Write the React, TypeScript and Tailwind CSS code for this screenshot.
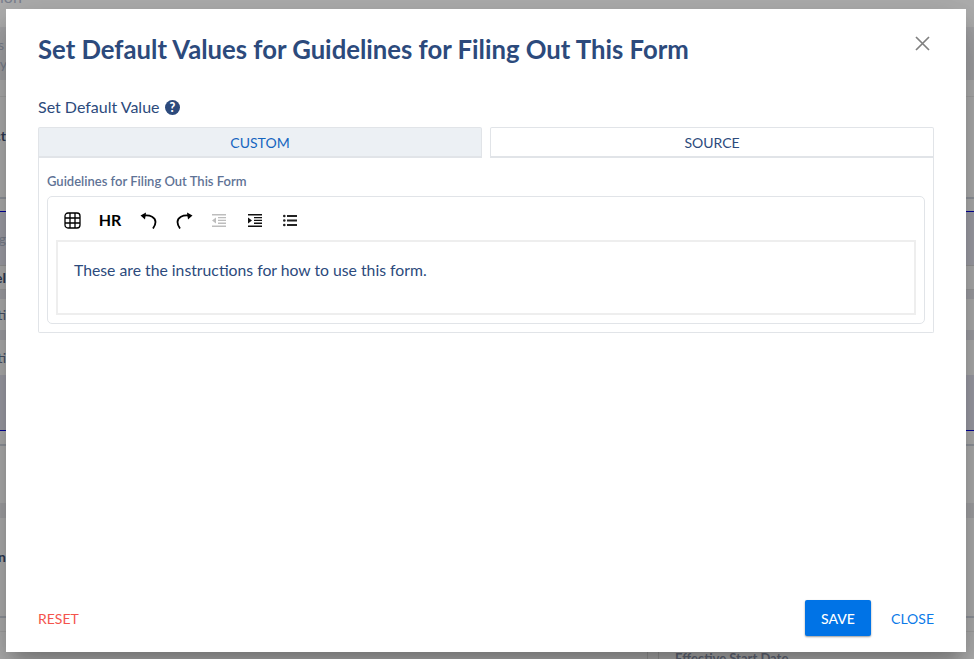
import React from "react";

const navy = "#2c4a7c";

function Tool({ className, children }: { className: string; children: React.ReactNode }) {
  return <span className={"flex h-6 items-center justify-center text-black " + className}>{children}</span>;
}

const TableIcon = () => (
  <svg width="17" height="17" viewBox="0 0 17 17" fill="none" stroke="#000" strokeWidth="1.3">
    <rect x="1" y="1" width="15" height="15" rx="3" />
    <path d="M6 1v15M11 1v15M1 6h15M1 11h15" />
  </svg>
);
const Undo = () => (
  <svg width="17" height="17" viewBox="0 0 17 17" fill="none" stroke="#000">
    <path d="M4.500 3.500C10 3 15.500 5 15.500 10c0 2.500-1 4.500-2.500 6.500" strokeWidth="1.8" />
    <path d="M0.500 3.500 6 0.500 5 7.500z" fill="#000" stroke="none" />
  </svg>
);
const Redo = () => (
  <svg width="17" height="17" viewBox="0 0 17 17" fill="none" stroke="#000">
    <path d="M12.500 3.500C7 3 1.500 5 1.500 10c0 2.500 1 4.500 2.500 6.500" strokeWidth="1.8" />
    <path d="M16.500 3.500 11 0.500 12 7.500z" fill="#000" stroke="none" />
  </svg>
);
const Indent = ({ color, flip }: { color: string; flip?: boolean }) => (
  <svg width="14" height="13" viewBox="0 0 14 13" fill={color}>
    <path d="M0 0h14v1.500H0zM6 3h8v1.300H6zM6 5.800h8v1.300H6zM6 8.600h8v1.300H6zM0 11.500h14V13H0z" />
    <path d={flip ? "M0 6.500 4 3.500v6z" : "M4 6.500 0 3.500v6z"} />
  </svg>
);
const List = () => (
  <svg width="14" height="13" viewBox="0 0 14 13" fill="#222">
    <path d="M4 1h10v2H4zM4 5.500h10v2H4zM4 10h10v2H4z" />
    <circle cx="1.300" cy="2" r="1.300" />
    <circle cx="1.300" cy="6.500" r="1.300" />
    <circle cx="1.300" cy="11" r="1.300" />
  </svg>
);

/* One row of the dimmed page behind the dialog: only its outer ends show. */
function Row({ className, left }: { className: string; left?: React.ReactNode }) {
  return (
    <div className={"flex w-full " + className}>
      <div className="flex w-[6px] justify-end whitespace-nowrap">{left}</div>
    </div>
  );
}

function Background() {
  return (
    <div className="flex h-full flex-col bg-[#b2b2b2] text-[14px]">
      <div className="h-[27px] bg-[#b0b0b0]">
        <div className="-ml-[6px] -mt-[13px] text-[16px] leading-5 text-[#7d8290]">tion</div>
      </div>
      <div className="flex h-[53px] flex-col justify-center bg-[#a6a6a8] text-[#7c8290]">
        <div className="flex h-[19px] w-[4px] justify-end leading-[19px]">s</div>
        <div className="flex h-[19px] w-[7px] justify-end leading-[19px]">ly</div>
      </div>
      <Row className="h-[17px] border-b border-[#a6a6a6]" />
      <Row className="h-[102px] border-b-[2px] border-[#94989f] pt-[28px]" left={<span className="font-bold text-[#2f3a52]">ct</span>} />
      <Row className="h-[13px] border-b border-[#0000a0]" />
      <Row className="h-[54px] items-center border-b border-[#9a9a9a] bg-[#a3a3ab]" left={<span className="text-[#7d828f]">g</span>} />
      <Row className="h-[24px] items-center border-b border-[#9f9f9f]" left={<span className="font-bold text-[#2f3a52]">el</span>} />
      <Row className="h-[9px] bg-[#a3a3a8]" />
      <Row className="h-[31px] items-center" left={<span className="text-[#48536a]">ti</span>} />
      <Row className="h-[10px] bg-[#a3a3a8]" />
      <Row className="h-[35px] items-center" left={<span className="text-[#48536a]">ti</span>} />
      <Row className="h-[56px] border-b border-[#0000a0] bg-[#a1a1aa]" />
      <Row className="h-[15px] border-b-[2px] border-[#94989f]" />
      <Row className="h-[57px]" />
      <Row className="h-[15px] bg-[#a6a6a8]" />
      <Row className="h-[100px] border-b-[2px] border-[#94989f] pt-[28px]" left={<span className="font-bold text-[#2f3a52]">n</span>} />
      <Row className="h-[14px] border-b border-[#a6a6a6]" />
      <div className="flex h-[27px] pl-[647px]">
        <span className="w-[11px] border-l border-[#9d9d9d]" />
        <span className="w-[17px] border-l border-[#9d9d9d]" />
        <span className="mt-[16px] whitespace-nowrap text-[13px] font-bold leading-5 text-[#666c7c]">Effective Start Date</span>
      </div>
    </div>
  );
}

export default function App() {
  return (
    <div className="relative h-[659px] w-[974px] overflow-hidden font-['Lato',sans-serif]">
      <Background />
      <div className="absolute left-[6px] top-[9px] flex h-[643px] w-[960px] flex-col bg-white px-8 pb-4 shadow-[0_11px_15px_-7px_rgba(0,0,0,0.2),0_24px_38px_3px_rgba(0,0,0,0.14),0_9px_46px_8px_rgba(0,0,0,0.12)]">
        <div className="flex items-start justify-between pt-[24px]">
          <h1 className="text-[25.7px] font-bold leading-[32px] text-[#2c4a7c]">
            Set Default Values for Guidelines for Filing Out This Form
          </h1>
          <svg className="mr-[4px] mt-[3px]" width="15" height="15" viewBox="0 0 15 15" stroke="#808080" strokeWidth="1.7" fill="none">
            <path d="M1 1l13 13M14 1 1 14" />
          </svg>
        </div>
        <div className="mt-[32px] flex items-center gap-[5px] text-[16px] leading-5 text-[#2c4a7c]">
          Set Default Value
          <svg width="15" height="15" viewBox="0 0 15 15">
            <circle cx="7.500" cy="7.500" r="7.500" fill={navy} />
            <text x="7.500" y="12" textAnchor="middle" fontSize="12.500" fontWeight="900" fill="#fff" fontFamily="Lato">?</text>
          </svg>
        </div>
        <div className="mt-[10px] grid h-[31px] grid-cols-2 gap-2 text-[14px]">
          <div className="flex items-center justify-center rounded-t-[2px] border border-b-[2px] border-[#e1e4e8] bg-[#ecf0f4] text-[#1565c0]">CUSTOM</div>
          <div className="flex items-center justify-center rounded-t-[2px] border border-b-[2px] border-[#e1e4e8] bg-white text-[#2c4a7c]">SOURCE</div>
        </div>
        <div className="h-[175px] rounded-b-[2px] border border-t-0 border-[#e1e4e8] px-2 pt-[15px]">
          <div className="text-[13px] font-semibold leading-4 text-[#5f7396]">Guidelines for Filing Out This Form</div>
          <div className="mt-[7px] h-[128px] rounded-[5px] border border-[#e1e4e8] px-2 pt-[11px]">
            <div className="flex h-6 items-center">
              <Tool className="w-[32px]"><TableIcon /></Tool>
              <Tool className="w-[44px]"><span className="text-[16px] font-bold">HR</span></Tool>
              <Tool className="w-[32px]"><Undo /></Tool>
              <Tool className="w-[40px]"><Redo /></Tool>
              <Tool className="w-[30px]"><Indent color="#bdbdbd" flip /></Tool>
              <Tool className="w-[42px]"><Indent color="#111" /></Tool>
              <Tool className="w-[28px]"><List /></Tool>
            </div>
            <div className="mt-[8px] h-[75px] border-[2px] border-[#eeeeee] px-[16px] pt-[18px] text-[15.75px] leading-5 text-[#2c4a7c]">
              These are the instructions for how to use this form.
            </div>
          </div>
        </div>
        <div className="mt-auto flex items-center justify-between text-[14px]">
          <span className="text-[#f4544c]">RESET</span>
          <div className="flex items-center gap-5">
            <span className="flex h-9 w-[66px] items-center justify-center rounded-[2px] bg-[#0073e6] font-medium text-white shadow-[0_1px_2px_rgba(0,0,0,0.4)]">SAVE</span>
            <span className="text-[#0b7ae8]">CLOSE</span>
          </div>
        </div>
      </div>
    </div>
  );
}
